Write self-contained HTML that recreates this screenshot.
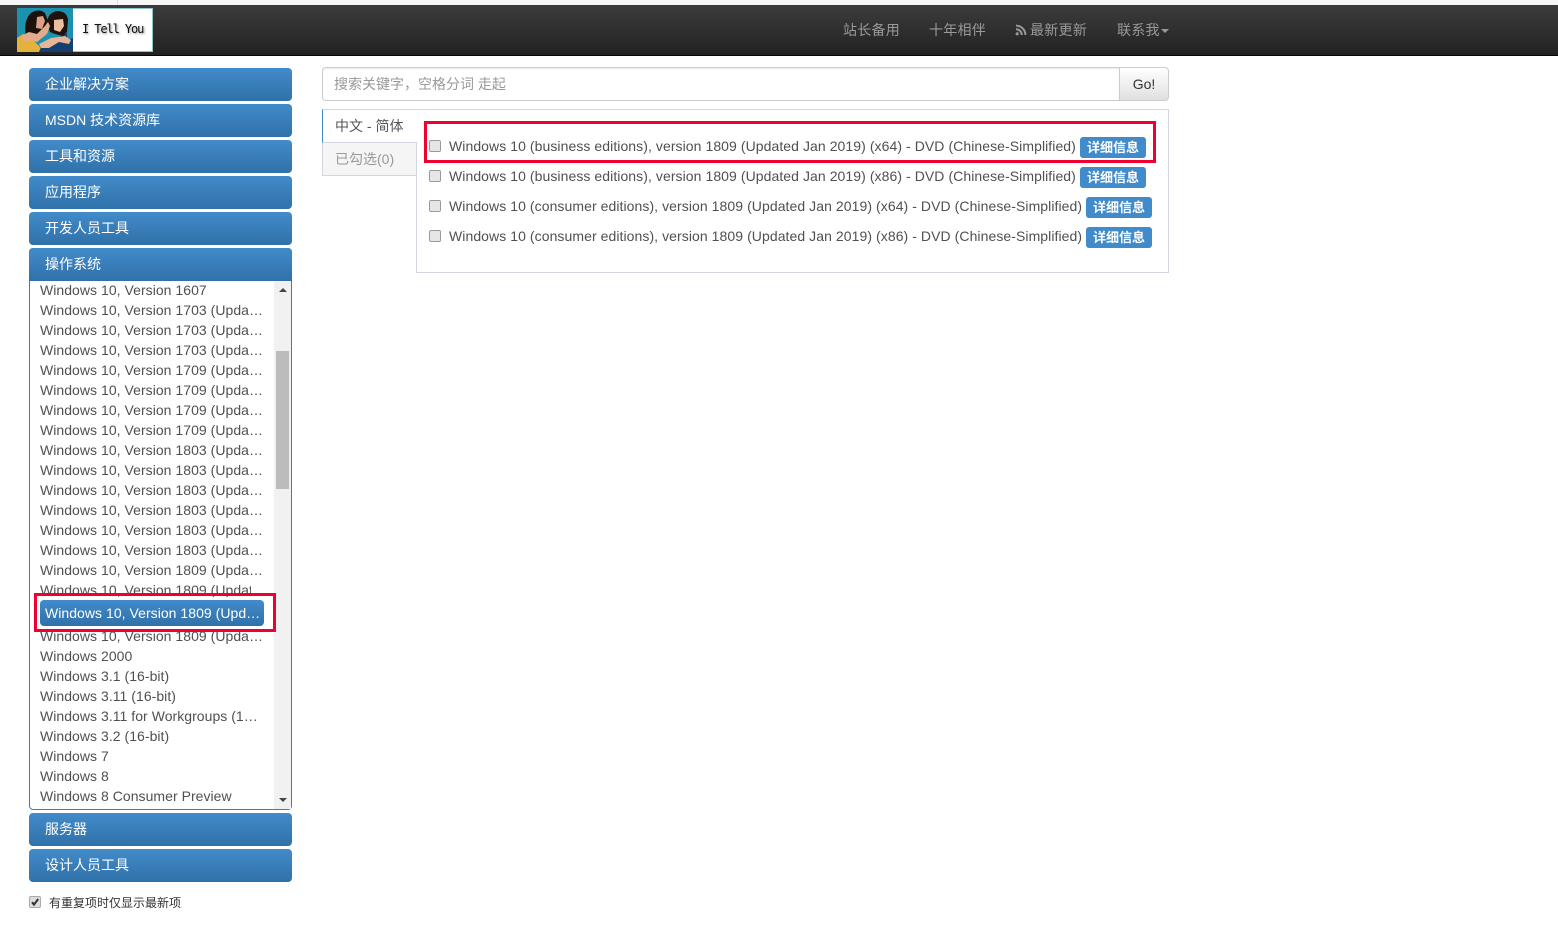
<!DOCTYPE html>
<html><head><meta charset="utf-8">
<style>
html,body{margin:0;padding:0;background:#fff;width:1558px;height:926px;overflow:hidden}
body{position:relative;font-family:"Liberation Sans","Noto Sans CJK SC",sans-serif;font-size:14px;color:#333}
.a{position:absolute;white-space:nowrap}
.head{position:absolute;left:29px;width:263px;height:33px;box-sizing:border-box;border-radius:4px;background:linear-gradient(#428bca,#3071a9);color:#fff;line-height:33px;padding-left:16px;font-size:14px}
.li{position:absolute;left:40px;width:225px;height:20px;line-height:20px;color:#505050;overflow:hidden;text-overflow:ellipsis;white-space:nowrap;letter-spacing:.04px}
.nav{position:absolute;top:20px;line-height:21px;color:#999;font-size:14px;letter-spacing:.25px}
.row{position:absolute;left:449px;height:20px;line-height:20px;white-space:nowrap;color:#505050;letter-spacing:.07px}
.cb{position:absolute;left:429px;width:12px;height:12px;box-sizing:border-box;border:1px solid #9a9a9a;border-radius:2px;background:#e6e6e6}
.lab{position:absolute;height:21px;line-height:21px;width:66px;text-align:center;background:#428bca;color:#fff;border-radius:3px;font-size:13px;font-weight:bold}
</style></head><body>
<div class="a" style="left:0;top:0;width:1558px;height:5px;background:#f6f6f6"></div>
<div class="a" style="left:117px;top:0;width:1px;height:5px;background:#ddd"></div>
<div class="a" style="left:0;top:5px;width:1558px;height:50px;background:linear-gradient(#3c3c3c,#222);border-bottom:1px solid #080808;box-sizing:content-box"></div>

<svg class="a" style="left:17px;top:8px" width="136" height="44" viewBox="0 0 136 44">
<rect width="136" height="44" fill="#8fc4cc"/>
<rect x="56" y="1" width="79" height="42" fill="#fff"/>
<rect width="56" height="44" fill="#1b93ae"/>
<path d="M0 44V30L6 26L14 30L22 38L26 44Z" fill="#e3b23c"/>
<path d="M22 44L26 34L40 30L52 24L56 26V44Z" fill="#143f70"/>
<path d="M50 14L56 12V30L50 32Z" fill="#1f8fb0"/>
<path d="M9 30Q6 12 14 5Q22 0 28 5L31 13L26 22L22 26L14 32Z" fill="#1c110d"/>
<path d="M30 16Q30 5 40 3Q50 3 51 12L50 24L46 28L38 26L33 24Z" fill="#1e130f"/>
<path d="M20 9L26 8L28 13L25 21L19 20Z" fill="#dca184"/>
<path d="M37 12L46 11L47 18L43 24L37 22Z" fill="#ecbfa2"/>
<path d="M4 28L12 24L20 26L28 18L31 14L33 18L30 26L20 34L12 32L8 34Z" fill="#e3ab8c"/>
<path d="M22 36L34 30L48 28L54 32L52 36L42 34L32 40L24 40Z" fill="#e6b496"/>
</svg>
<div class="a" style="left:82px;top:20px;font-family:'DejaVu Sans Mono',monospace;font-size:12px;line-height:18px;color:#111;text-shadow:1px 1px 2px #888;letter-spacing:-1.1px">I Tell You</div>

<div class="nav" style="left:843px">站长备用</div>
<div class="nav" style="left:929px">十年相伴</div>
<svg class="a" style="left:1015px;top:24px" width="12" height="12" viewBox="0 0 12 12"><circle cx="2.2" cy="9.8" r="1.6" fill="#999"/><path d="M1 5.2A5.8 5.8 0 0 1 6.8 11M1 1.6A9.4 9.4 0 0 1 10.4 11" fill="none" stroke="#999" stroke-width="2"/></svg>
<div class="nav" style="left:1030px">最新更新</div>
<div class="nav" style="left:1117px">联系我</div>
<div class="a" style="left:1161px;top:29px;width:0;height:0;border-left:4px solid transparent;border-right:4px solid transparent;border-top:4px solid #999"></div>

<div class="head" style="top:68px">企业解决方案</div>
<div class="head" style="top:104px">MSDN 技术资源库</div>
<div class="head" style="top:140px">工具和资源</div>
<div class="head" style="top:176px">应用程序</div>
<div class="head" style="top:212px">开发人员工具</div>
<div class="a" style="left:29px;top:248px;width:263px;height:562px;box-sizing:border-box;border:1px solid #3a7cb5;border-radius:4px;background:#fff"></div>
<div class="head" style="top:248px;border-radius:4px 4px 0 0">操作系统</div>

<div class="a" style="left:274px;top:281px;width:17px;height:528px;background:#f1f1f1"></div>
<div class="a" style="left:276px;top:351px;width:13px;height:138px;background:#bcbcbc"></div>
<div class="a" style="left:279px;top:288px;width:0;height:0;border-left:4px solid transparent;border-right:4px solid transparent;border-bottom:4px solid #444"></div>
<div class="a" style="left:279px;top:798px;width:0;height:0;border-left:4px solid transparent;border-right:4px solid transparent;border-top:4px solid #444"></div>

<div class="li" style="top:280px">Windows 10, Version 1607</div>
<div class="li" style="top:300px">Windows 10, Version 1703 (Updated Jan 2019)</div>
<div class="li" style="top:320px">Windows 10, Version 1703 (Updated Jan 2019)</div>
<div class="li" style="top:340px">Windows 10, Version 1703 (Updated Jan 2019)</div>
<div class="li" style="top:360px">Windows 10, Version 1709 (Updated Jan 2019)</div>
<div class="li" style="top:380px">Windows 10, Version 1709 (Updated Jan 2019)</div>
<div class="li" style="top:400px">Windows 10, Version 1709 (Updated Jan 2019)</div>
<div class="li" style="top:420px">Windows 10, Version 1709 (Updated Jan 2019)</div>
<div class="li" style="top:440px">Windows 10, Version 1803 (Updated Jan 2019)</div>
<div class="li" style="top:460px">Windows 10, Version 1803 (Updated Jan 2019)</div>
<div class="li" style="top:480px">Windows 10, Version 1803 (Updated Jan 2019)</div>
<div class="li" style="top:500px">Windows 10, Version 1803 (Updated Jan 2019)</div>
<div class="li" style="top:520px">Windows 10, Version 1803 (Updated Jan 2019)</div>
<div class="li" style="top:540px">Windows 10, Version 1803 (Updated Jan 2019)</div>
<div class="li" style="top:560px">Windows 10, Version 1809 (Updated Jan 2019)</div>
<div class="li" style="top:580px;height:17px;width:211px;text-overflow:clip">Windows 10, Version 1809 (Updated Jan 2019)</div>
<div class="li" style="top:629px;height:17px;line-height:14px;padding-top:0">Windows 10, Version 1809 (Updated Jan 2019)</div>
<div class="li" style="top:646px">Windows 2000</div>
<div class="li" style="top:666px">Windows 3.1 (16-bit)</div>
<div class="li" style="top:686px">Windows 3.11 (16-bit)</div>
<div class="li" style="top:706px">Windows 3.11 for Workgroups (16-bit)</div>
<div class="li" style="top:726px">Windows 3.2 (16-bit)</div>
<div class="li" style="top:746px">Windows 7</div>
<div class="li" style="top:766px">Windows 8</div>
<div class="li" style="top:786px">Windows 8 Consumer Preview</div>

<div class="a" style="left:40px;top:600px;width:224px;height:26px;box-sizing:border-box;padding:0 2px 0 5px;line-height:26px;background:linear-gradient(#428bca,#3071a9);border-radius:4px;color:#fff;overflow:hidden;text-overflow:ellipsis;letter-spacing:.04px">Windows 10, Version 1809 (Updated Jan 2019)</div>
<div class="a" style="left:34px;top:593px;width:242px;height:39px;box-sizing:border-box;border:3px solid #f00030"></div>

<div class="head" style="top:813px">服务器</div>
<div class="head" style="top:849px">设计人员工具</div>

<div class="a" style="left:29px;top:896px;width:12px;height:12px;box-sizing:border-box;border:1px solid #aaa;border-radius:2px;background:#ddd"></div>
<svg class="a" style="left:29px;top:896px" width="12" height="12" viewBox="0 0 12 12"><path d="M3 6.2L5 8.6L9.2 3" fill="none" stroke="#333" stroke-width="2"/></svg>
<div class="a" style="left:49px;top:893px;line-height:21px;font-size:12px;color:#333">有重复项时仅显示最新项</div>

<div class="a" style="left:322px;top:67px;width:798px;height:34px;box-sizing:border-box;border:1px solid #ccc;border-radius:4px 0 0 4px;padding-left:11px;line-height:33px;color:#999;background:#fff;box-shadow:inset 0 1px 1px rgba(0,0,0,.075)">搜索关键字，空格分词 走起</div>
<div class="a" style="left:1119px;top:67px;width:50px;height:34px;box-sizing:border-box;border:1px solid #ccc;border-radius:0 4px 4px 0;text-align:center;line-height:33px;color:#333;background:linear-gradient(#fff,#e0e0e0)">Go!</div>

<div class="a" style="left:416px;top:109px;width:753px;height:164px;box-sizing:border-box;border:1px solid #d3d6e2"></div>
<div class="a" style="left:322px;top:109px;width:95px;height:34px;box-sizing:border-box;background:#fff;border:1px solid #d3d6e2;border-right:none;border-left:1px solid #428bca;padding-left:12px;line-height:33px;color:#555">中文 - 简体</div>
<div class="a" style="left:322px;top:143px;width:95px;height:33px;box-sizing:border-box;background:#f5f5f5;border:1px solid #d3d6e2;border-top:none;padding-left:12px;line-height:33px;color:#999">已勾选(0)</div>

<div class="cb" style="top:140px"></div>
<div class="row" style="top:136px">Windows 10 (business editions), version 1809 (Updated Jan 2019) (x64) - DVD (Chinese-Simplified)</div>
<div class="lab" style="left:1080px;top:137px">详细信息</div>
<div class="cb" style="top:170px"></div>
<div class="row" style="top:166px">Windows 10 (business editions), version 1809 (Updated Jan 2019) (x86) - DVD (Chinese-Simplified)</div>
<div class="lab" style="left:1080px;top:167px">详细信息</div>
<div class="cb" style="top:200px"></div>
<div class="row" style="top:196px">Windows 10 (consumer editions), version 1809 (Updated Jan 2019) (x64) - DVD (Chinese-Simplified)</div>
<div class="lab" style="left:1086px;top:197px">详细信息</div>
<div class="cb" style="top:230px"></div>
<div class="row" style="top:226px">Windows 10 (consumer editions), version 1809 (Updated Jan 2019) (x86) - DVD (Chinese-Simplified)</div>
<div class="lab" style="left:1086px;top:227px">详细信息</div>

<div class="a" style="left:424px;top:121px;width:732px;height:42px;box-sizing:border-box;border:3px solid #f00030"></div>
</body></html>
